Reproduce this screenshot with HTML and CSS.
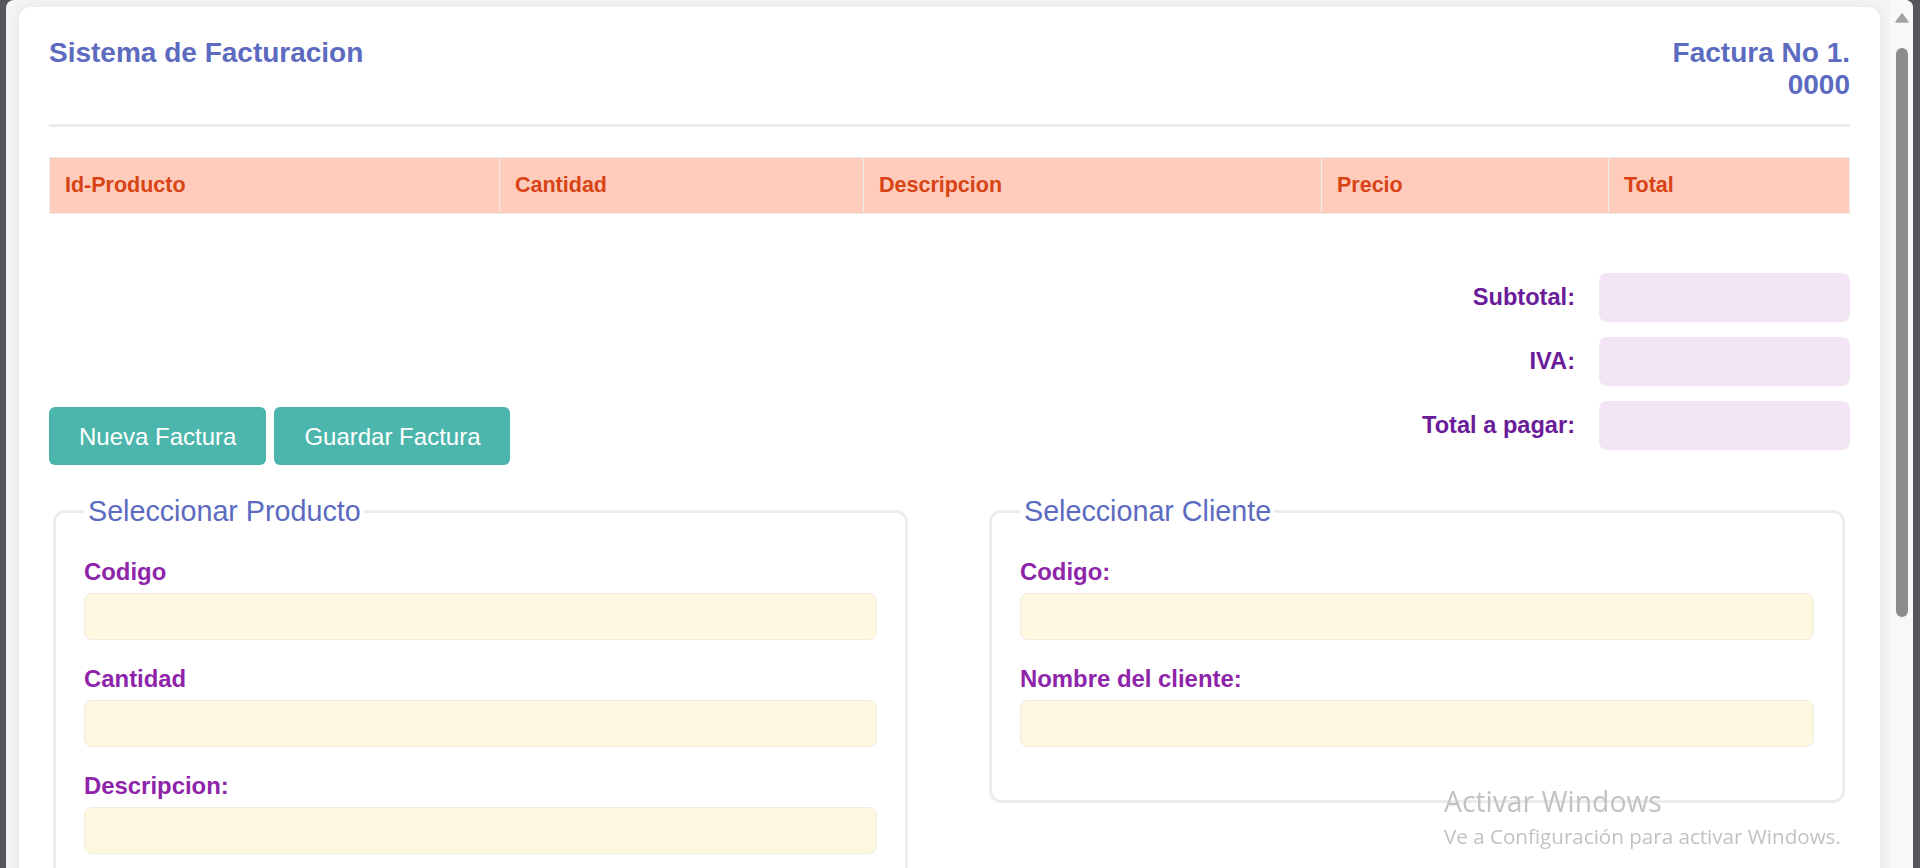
FILE: index.html
```html
<!DOCTYPE html>
<html lang="es">
<head>
<meta charset="utf-8">
<title>Sistema de Facturacion</title>
<link rel="stylesheet" href="styles.css">
</head>
<body>
<div class="window">
  <div class="viewport">
    <main class="card">
      <header class="invoice-header">
        <h2 class="title">Sistema de Facturacion</h2>
        <div class="invoice-no">Factura No 1. 0000</div>
      </header>

      <table class="items">
        <colgroup>
          <col class="c1"><col class="c2"><col class="c3"><col class="c4"><col class="c5">
        </colgroup>
        <thead>
          <tr>
            <th>Id-Producto</th>
            <th>Cantidad</th>
            <th>Descripcion</th>
            <th>Precio</th>
            <th>Total</th>
          </tr>
        </thead>
        <tbody></tbody>
      </table>

      <section class="summary">
        <div class="actions">
          <button class="btn">Nueva Factura</button>
          <button class="btn">Guardar Factura</button>
        </div>
        <div class="totals">
          <div class="total-row"><label class="total-label">Subtotal:</label><input class="total-field" readonly></div>
          <div class="total-row"><label class="total-label">IVA:</label><input class="total-field" readonly></div>
          <div class="total-row"><label class="total-label">Total a pagar:</label><input class="total-field" readonly></div>
        </div>
      </section>

      <section class="panels">
        <fieldset class="panel">
          <legend class="panel-title">Seleccionar Producto</legend>
          <div class="field"><label class="field-label">Codigo</label><input class="text-input"></div>
          <div class="field"><label class="field-label">Cantidad</label><input class="text-input"></div>
          <div class="field"><label class="field-label">Descripcion:</label><input class="text-input"></div>
        </fieldset>
        <fieldset class="panel panel-right">
          <legend class="panel-title">Seleccionar Cliente</legend>
          <div class="field"><label class="field-label">Codigo:</label><input class="text-input"></div>
          <div class="field"><label class="field-label">Nombre del cliente:</label><input class="text-input"></div>
        </fieldset>
      </section>
    </main>
  </div>
  <div class="scrollbar">
    <svg class="scroll-arrow" width="14" height="10" viewBox="0 0 14 10"><path d="M7 1 L13 9 L1 9 Z" fill="#a3a3a3" stroke="#a3a3a3" stroke-width="1.5" stroke-linejoin="round"/></svg>
    <div class="scroll-thumb"></div>
  </div>
</div>
<div class="watermark">
  <div class="wm-title">Activar Windows</div>
  <div class="wm-sub">Ve a Configuración para activar Windows.</div>
</div>
</body>
</html>
```

FILE: styles.css
```css
* { box-sizing: border-box; }

html, body {
  margin: 0;
  height: 868px;
  overflow: hidden;
}

body {
  background: #55555a;
  font-family: "Liberation Sans", Arial, sans-serif;
}

.window {
  margin-left: 6px;
  width: 1907px;
  height: 868px;
  background: #f3f4f6;
  border-radius: 8px 8px 0 0;
  display: flex;
  overflow: hidden;
}

.viewport {
  flex: 1;
  padding: 7px 10px 0 13px;
  overflow: hidden;
}

.card {
  background: #ffffff;
  border-radius: 12px;
  padding: 30px;
  box-shadow: 0 0 12px rgba(0, 0, 0, 0.07);
}

/* header */
.invoice-header {
  display: flex;
  justify-content: space-between;
  align-items: flex-start;
  padding-bottom: 24px;
  border-bottom: 3px solid #ececec;
  margin-bottom: 30px;
}

.title {
  margin: 0;
  font-size: 28px;
  line-height: 31.5px;
  font-weight: bold;
  color: #5c6bc0;
}

.invoice-no {
  max-width: 190px;
  text-align: right;
  font-size: 28px;
  line-height: 31.5px;
  font-weight: bold;
  color: #5c6bc0;
}

/* table */
.items {
  width: 100%;
  border-collapse: collapse;
  table-layout: fixed;
}

.items .c1 { width: 450px; }
.items .c2 { width: 364px; }
.items .c3 { width: 458px; }
.items .c4 { width: 287px; }

.items th {
  background: #ffccbc;
  color: #d84315;
  font-size: 21.5px;
  font-weight: bold;
  text-align: left;
  padding: 15px;
  border: 1px solid #ececec;
}

/* summary */
.summary {
  margin-top: 59px;
  display: flex;
  justify-content: space-between;
  align-items: flex-end;
}

.actions {
  display: flex;
  gap: 8px;
}

.btn {
  background: #4db6ac;
  color: #ffffff;
  border: none;
  border-radius: 6px;
  padding: 15.5px 30px;
  font-family: "Liberation Sans", Arial, sans-serif;
  font-size: 24px;
  line-height: 27px;
}

.total-row {
  display: flex;
  align-items: center;
  justify-content: flex-end;
  margin-bottom: 15px;
}

.total-label {
  font-size: 23.6px;
  font-weight: bold;
  color: #6a1b9a;
  margin-right: 24px;
}

.total-field {
  width: 251px;
  height: 49px;
  background: #f3e5f5;
  border: none;
  border-radius: 8px;
}

/* panels */
.panels {
  margin-top: 30px;
  display: flex;
  justify-content: space-between;
  align-items: flex-start;
}

.panel {
  width: 855px;
  margin: 0 0 0 4px;
  min-width: 0;
  border: 3px solid #ececec;
  border-radius: 12px;
  padding: 30px 28px 28px 28px;
}

.panel-right {
  width: 856px;
  margin: 0 5px 0 0;
}

.panel-title {
  padding: 0 3px 0 4px;
  font-size: 28.7px;
  line-height: 33px;
  color: #5c6bc0;
}

.field {
  margin-bottom: 25px;
}

.field-label {
  display: block;
  font-size: 23.9px;
  font-weight: bold;
  color: #8e24aa;
  line-height: 27px;
  margin-bottom: 8px;
}

.text-input {
  display: block;
  width: 100%;
  height: 47px;
  background: #fff8e1;
  border: 1px solid #f0ebdd;
  border-radius: 8px;
}

/* scrollbar */
.scrollbar {
  width: 23px;
  height: 868px;
  background: #f8f8f8;
  display: flex;
  flex-direction: column;
  align-items: center;
  padding-top: 13px;
  padding-left: 1px;
}

.scroll-arrow {
  display: block;
}

.scroll-thumb {
  margin-top: 25px;
  width: 12px;
  height: 569px;
  background: #8c8c8c;
  border-radius: 6px;
}

/* windows activation watermark */
.watermark {
  position: fixed;
  left: 1444px;
  top: 784px;
  font-family: "Open Sans", "Noto Sans", sans-serif;
  font-weight: 400;
  color: #c2c2c2;
  pointer-events: none;
}

.wm-title {
  font-size: 28.3px;
  line-height: 34px;
}

.wm-sub {
  margin-top: 4px;
  font-size: 20.6px;
  line-height: 28px;
}
```
